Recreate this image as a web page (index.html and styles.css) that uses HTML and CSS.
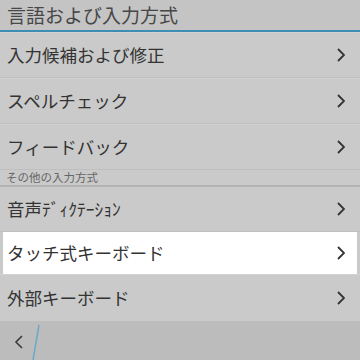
FILE: index.html
```html
<!DOCTYPE html>
<html lang="ja">
<head>
<meta charset="utf-8">
<link rel="stylesheet" href="styles.css">
</head>
<body>
<div class="screen">
  <div class="header">言語および入力方式</div>
  <div class="list">
    <div class="row"><span class="label">入力候補および修正</span><svg class="chev" width="8" height="14" viewBox="0 0 8 14"><polyline points="1,1 7,7 1,13"/></svg></div>
    <div class="row"><span class="label">スペルチェック</span><svg class="chev" width="8" height="14" viewBox="0 0 8 14"><polyline points="1,1 7,7 1,13"/></svg></div>
    <div class="row"><span class="label">フィードバック</span><svg class="chev" width="8" height="14" viewBox="0 0 8 14"><polyline points="1,1 7,7 1,13"/></svg></div>
    <div class="subheader">その他の入力方式</div>
    <div class="row row-short"><span class="label">音声ﾃﾞｨｸﾃｰｼｮﾝ</span><svg class="chev" width="8" height="14" viewBox="0 0 8 14"><polyline points="1,1 7,7 1,13"/></svg></div>
    <div class="row row-selected"><span class="label">タッチ式キーボード</span><svg class="chev" width="8" height="14" viewBox="0 0 8 14"><polyline points="1,1 7,7 1,13"/></svg></div>
    <div class="row row-last"><span class="label">外部キーボード</span><svg class="chev" width="8" height="14" viewBox="0 0 8 14"><polyline points="1,1 7,7 1,13"/></svg></div>
  </div>
  <div class="bottombar">
    <svg class="back" width="10" height="14" viewBox="0 0 10 14"><polyline points="8,1 2,7 8,13"/></svg>
    <svg class="slash" width="10" height="36" viewBox="0 0 10 36"><line x1="8" y1="1" x2="2" y2="36"/></svg>
  </div>
</div>
</body>
</html>
```

FILE: styles.css
```css
html, body {
  margin: 0;
  padding: 0;
}
body {
  width: 360px;
  height: 360px;
  overflow: hidden;
  background: #cacaca;
  font-family: "Noto Sans CJK JP", "Noto Sans", sans-serif;
}
.screen {
  display: flex;
  flex-direction: column;
  height: 360px;
}
.header {
  height: 30px;
  background: #c4c4c4;
  color: #474747;
  font-size: 19px;
  line-height: 30px;
  padding-left: 7px;
  border-bottom: 2px solid #3d8db5;
}
.list {
  display: flex;
  flex-direction: column;
}
.row {
  height: 45px;
  display: flex;
  align-items: center;
  justify-content: space-between;
  padding: 0 15px 0 7px;
  border-bottom: 1px solid #bfbfbf;
  box-shadow: inset 0 1px 0 #d2d2d2;
}
.row-short {
  height: 44px;
  box-shadow: none;
}
.row-selected {
  height: 42px;
  margin: 0 3px;
  padding: 0 12px 0 4px;
  background: #ffffff;
  border-bottom: none;
  box-shadow: none;
}
.row-last {
  height: 47px;
  border-bottom: none;
}
.label {
  color: #333333;
  font-size: 17.5px;
  line-height: 1;
  white-space: nowrap;
}
.chev polyline {
  fill: none;
  stroke: #333333;
  stroke-width: 1.8;
}
.subheader {
  height: 15px;
  color: #666666;
  font-size: 11.5px;
  line-height: 15px;
  padding-left: 6px;
  border-bottom: 2px solid #b3b3b3;
}
.bottombar {
  flex: 1;
  background: #bcbcbc;
  display: flex;
  align-items: flex-end;
  position: relative;
}
.back {
  position: absolute;
  left: 14px;
  top: 14px;
}
.back polyline {
  fill: none;
  stroke: #3a3a3a;
  stroke-width: 1.6;
}
.slash {
  position: absolute;
  left: 31px;
  top: 3px;
}
.slash line {
  stroke: #69a9c9;
  stroke-width: 1.5;
}
```
